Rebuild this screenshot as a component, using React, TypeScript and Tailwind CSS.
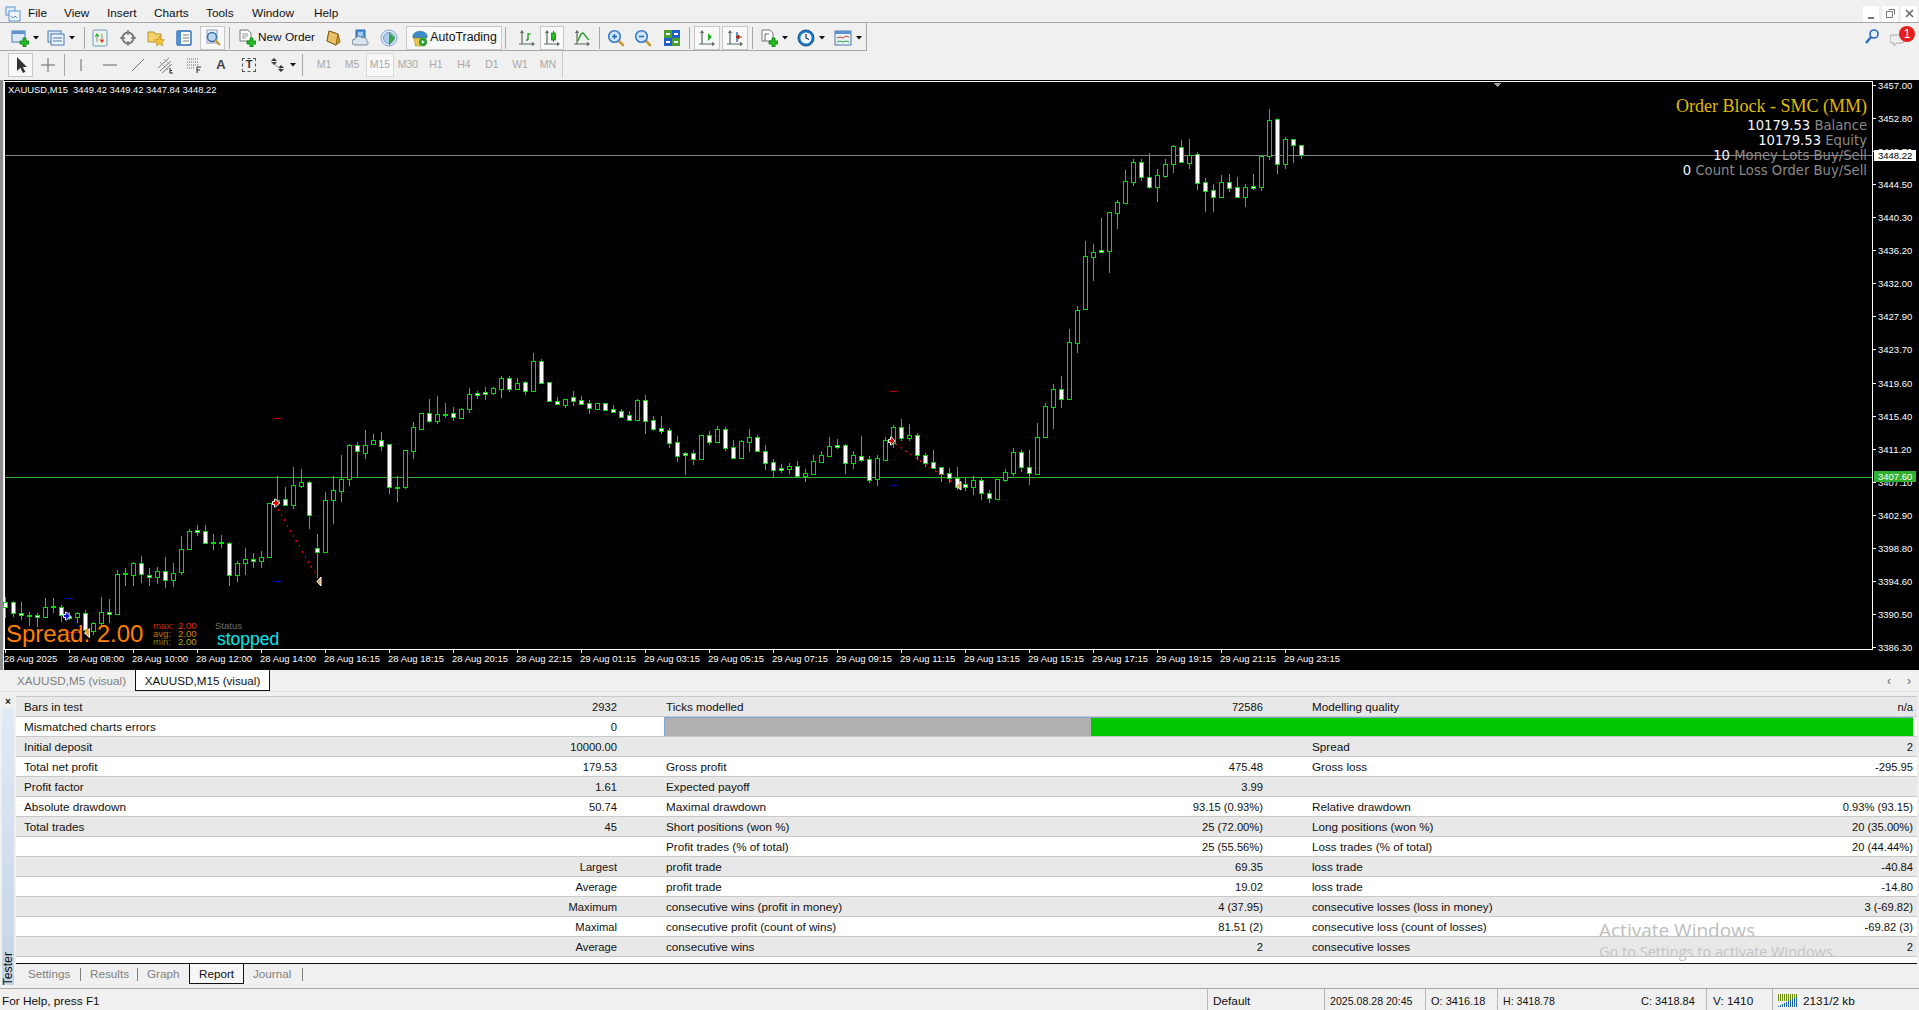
import React from "react";

type C = [number, number, number, number, number];

const lower: C[] = [
[597,602,607,618,1],[601,602,613,617,1],[602,613,615,620,1],[612,615,616,626,1],[613,615,617,627,1],[598,607,617,618,0],[598,606,607,613,1],[605,607,615,622,1],[612,616,618,620,1],[612,613,617,623,0],
[610,613,630,632,1],[622,623,631,635,0],[597,612,623,627,0],[599,612,614,623,1],[570,574,614,615,0],[568,573,574,586,1],[562,563,575,586,0],[556,563,574,583,1],[568,575,577,586,1],[567,571,577,584,0],
[557,571,580,588,1],[563,573,580,587,0],[536,549,572,575,0],[529,531,549,550,0],[525,530,532,536,1],[525,531,543,543,1],[534,542,543,550,1],[535,542,543,548,1],[542,543,575,586,1],[561,563,575,582,0],
[548,559,563,575,0],[553,559,561,568,1],[551,557,561,568,0],[503,503,557,558,0],[476,500,503,505,0],[487,499,505,506,1],[467,485,505,509,0],[469,482,486,488,0],[481,482,515,529,1],[534,548,552,578,1],
[492,500,552,553,0],[476,490,500,524,0],[455,479,491,502,0],[444,445,479,486,0],[442,445,451,477,1],[430,445,453,459,0],[434,440,444,445,0],[432,440,446,451,1],[444,444,487,494,1],[476,487,488,502,1],
[450,450,487,489,0],[422,427,451,459,0],[413,413,429,430,0],[399,413,421,423,1],[396,414,421,424,0],[403,414,415,418,1],[407,413,417,421,1],[408,409,418,418,0],[388,394,409,413,0],[391,393,395,399,1],
[387,392,394,400,1],[387,388,393,395,0],
];

const middleRaw: C[] = [
[108,115,148,173,0],[108,115,148,155,1],[113,130,148,150,0],[123,127,152,165,1],[40,64,152,152,0],[57,64,128,132,1],[125,127,182,186,1],[172,182,193,195,1],[178,178,195,204,0],[153,172,182,198,1],
[168,181,191,195,1],[180,190,203,222,1],[188,190,206,208,0],[190,190,209,210,1],[195,208,215,219,1],[208,214,231,233,1],[213,226,239,240,1],[176,181,240,243,0],[165,181,242,282,1],[228,240,267,273,1],
[228,265,272,282,1],[265,270,308,323,1],[288,307,347,365,1],[337,340,346,405,1],[330,340,356,375,1],[286,286,356,356,0],[273,286,305,315,1],[258,268,305,310,0],[262,268,323,333,1],[300,322,353,357,1],
[300,304,353,355,0],[266,292,305,336,0],[286,292,334,336,1],[315,334,368,390,1],[357,367,389,412,1],[372,385,389,399,1],[369,378,386,402,0],[363,379,407,408,1],[388,400,407,426,0],[346,364,402,402,0],
[333,346,366,369,0],[291,318,348,348,0],[297,316,321,327,1],[312,316,368,402,1],[333,346,368,387,0],[288,349,360,365,1],[348,358,420,430,1],[345,355,418,438,0],[292,301,360,360,0],[255,262,310,325,0],
[238,262,293,303,1],[252,286,294,303,0],[280,286,346,360,1],[340,346,368,381,1],[331,367,383,385,1],[380,382,402,426,1],[385,400,414,430,1],[381,414,440,450,1],[414,432,440,453,1],[408,421,440,465,0],
[415,421,460,480,1],[450,460,473,488,1],[418,418,476,476,0],[388,397,420,426,0],[324,337,398,408,0],[331,337,382,396,1],[331,382,400,435,1],[250,290,402,402,0],
];

const upper: C[] = [
[403,406,437,438,0],[384,389,407,429,0],[376,389,399,408,1],[329,342,399,399,0],[306,310,343,353,0],[241,256,309,309,0],[244,252,257,281,0],[218,250,252,251,1],[212,212,251,273,0],[200,202,213,229,0],
[170,181,203,203,0],[159,162,182,186,0],[159,162,177,181,1],[153,177,187,189,1],[169,175,187,202,0],[159,164,176,178,0],[145,146,164,173,0],[140,147,162,163,1],[139,155,163,169,0],[152,154,183,190,1],
[178,182,191,212,1],[184,190,197,212,1],[175,182,197,198,0],[174,182,188,192,1],[177,187,197,197,1],[184,187,197,207,0],[174,186,188,190,1],[156,156,187,191,0],[109,120,156,160,0],[118,119,164,174,1],
[137,139,164,169,0],[139,139,145,163,1],[145,145,155,159,1],
];

const candles: C[] = [
  ...lower,
  ...middleRaw.map(([a, b, c, d, f]) => [340 + a / 3, 340 + b / 3, 340 + c / 3, 340 + d / 3, f] as C),
  ...upper,
];

const prices = ["3457.00","3452.80","3448.70","3444.50","3440.30","3436.20","3432.00","3427.90","3423.70","3419.60","3415.40","3411.20","3407.10","3402.90","3398.80","3394.60","3390.50","3386.30"];
const times = ["28 Aug 2025","28 Aug 08:00","28 Aug 10:00","28 Aug 12:00","28 Aug 14:00","28 Aug 16:15","28 Aug 18:15","28 Aug 20:15","28 Aug 22:15","29 Aug 01:15","29 Aug 03:15","29 Aug 05:15","29 Aug 07:15","29 Aug 09:15","29 Aug 11:15","29 Aug 13:15","29 Aug 15:15","29 Aug 17:15","29 Aug 19:15","29 Aug 21:15","29 Aug 23:15"];

const GREEN = "#00e000";

function Chart() {
  return (
    <svg viewBox="0 80 1919 590" width={1919} height={590} className="block" shapeRendering="crispEdges" style={{ fontFamily: "'Liberation Sans', sans-serif" }}>
      <rect x={0} y={80} width={1919} height={590} fill="#000" />
      <rect x={0} y={80} width={3} height={590} fill="#8c8c8c" />
      <rect x={3} y={80} width={1} height={590} fill="#e8e8e8" />
      <rect x={4.5} y={81.5} width={1868} height={568} fill="none" stroke="#ffffff" />
      <rect x={5} y={155} width={1867} height={1} fill="#808080" />
      <rect x={5} y={477} width={1867} height={1} fill="#2fb02f" />
      {candles.map(([hi, top, bot, lo, fill], k) => {
        const cx = 5 + 8 * k;
        const t = Math.round(top);
        const b = Math.max(Math.round(bot), t + 1);
        return (
          <g key={k}>
            <rect x={cx} y={Math.round(hi)} width={1} height={Math.max(1, Math.round(lo) - Math.round(hi))} fill={GREEN} />
            <rect x={cx - 2} y={t} width={5} height={b - t + 1} fill={GREEN} />
            {b - t >= 2 && <rect x={cx - 1} y={t + 1} width={3} height={b - t - 1} fill={fill ? "#ffffff" : "#000000"} />}
          </g>
        );
      })}
      {/* trade lines */}
      <line x1={278} y1={509} x2={317} y2={577} stroke="#e00000" strokeDasharray="2 4" />
      <line x1={895} y1={444} x2={955} y2={484} stroke="#e00000" strokeDasharray="2 4" />
      <line x1={65} y1={633} x2={82} y2={632} stroke="#e00000" strokeDasharray="3 1" />
      <line x1={74} y1={621} x2={83} y2={630} stroke="#0000d0" strokeDasharray="2 3" />
      {/* level dashes */}
      <rect x={274} y={418} width={7} height={1} fill="#c00000" />
      <rect x={890} y={391} width={7} height={1} fill="#c00000" />
      <rect x={274} y={581} width={7} height={1} fill="#0000c0" />
      <rect x={890} y={485} width={7} height={1} fill="#0000c0" />
      <rect x={66} y={598} width={7} height={1} fill="#0000c0" />
      {/* arrows */}
      <g shapeRendering="auto">
        <path d="M272.5 501.5h2v-2.5h1l4 4-4 4h-1v-2.500h-2z" fill="#e00000" stroke="#fff" strokeWidth={1} />
        <path d="M888.5 439.500h2v-2.500h1l3.500 4-3.500 4h-1v-2.500h-2z" fill="#e00000" stroke="#fff" strokeWidth={1} />
        <path d="M63.500 614.500h2v-2.500h1l4 4-4 4h-1v-2.500h-2z" fill="#1818e0" stroke="#fff" strokeWidth={1} />
        <path d="M321 577v9l-4-4.500z" fill="#e0a040" stroke="#fff" strokeWidth={1} />
        <path d="M961 481.500v8.500l-5-4.200z" fill="#e0a040" stroke="#fff" strokeWidth={1} />
        <path d="M89.500 628.500v9l-5-4.500z" fill="#e0a040" stroke="#fff" strokeWidth={1} />
      </g>
      <path d="M1493 83h9l-4.500 4z" fill="#9a9a9a" />
      {/* price axis */}
      {prices.map((p, i) => {
        const y = Math.round(85 + 33.06 * i);
        return (
          <g key={p}>
            <rect x={1873} y={y} width={3} height={1} fill="#fff" />
            <text x={1878} y={y + 3.5} fontSize={9.5} fill="#fff" shapeRendering="auto">{p}</text>
          </g>
        );
      })}
      <rect x={1874} y={150} width={42} height={11} fill="#fff" />
      <text x={1878} y={158.5} fontSize={9.5} fill="#000">3448.22</text>
      <rect x={1874} y={471} width={42} height={11} fill="#2fb02f" />
      <text x={1878} y={479.5} fontSize={9.5} fill="#fff">3407.60</text>
      {/* time axis */}
      {times.map((t, i) => (
        <g key={t}>
          <rect x={5 + 64 * i} y={650} width={1} height={3} fill="#fff" />
          <text x={4 + 64 * i} y={662} fontSize={9.5} fill="#fff">{t}</text>
        </g>
      ))}
    </svg>
  );
}

function Row({ children, odd }: { children: React.ReactNode; odd: boolean }) {
  return (
    <div className={`grid grid-cols-[593px_646px_650px] h-5 border-b border-[#c8c8c8] items-center pl-2 text-[11.7px] leading-none text-[#111] ${odd ? "bg-[#e8e8e8]" : "bg-white"}`}>
      {children}
    </div>
  );
}

function Cell({ label, value }: { label?: string; value?: string }) {
  return (
    <div className="flex justify-between h-3 leading-3 items-baseline">
      <span>{label}</span>
      <span className="text-[11.2px]">{value}</span>
    </div>
  );
}

const rows: [string, string, string, string, string, string][] = [
  ["Bars in test", "2932", "Ticks modelled", "72586", "Modelling quality", "n/a"],
  ["Mismatched charts errors", "0", "", "", "", ""],
  ["Initial deposit", "10000.00", "", "", "Spread", "2"],
  ["Total net profit", "179.53", "Gross profit", "475.48", "Gross loss", "-295.95"],
  ["Profit factor", "1.61", "Expected payoff", "3.99", "", ""],
  ["Absolute drawdown", "50.74", "Maximal drawdown", "93.15 (0.93%)", "Relative drawdown", "0.93% (93.15)"],
  ["Total trades", "45", "Short positions (won %)", "25 (72.00%)", "Long positions (won %)", "20 (35.00%)"],
  ["", "", "Profit trades (% of total)", "25 (55.56%)", "Loss trades (% of total)", "20 (44.44%)"],
  ["", "Largest", "profit trade", "69.35", "loss trade", "-40.84"],
  ["", "Average", "profit trade", "19.02", "loss trade", "-14.80"],
  ["", "Maximum", "consecutive wins (profit in money)", "4 (37.95)", "consecutive losses (loss in money)", "3 (-69.82)"],
  ["", "Maximal", "consecutive profit (count of wins)", "81.51 (2)", "consecutive loss (count of losses)", "-69.82 (3)"],
  ["", "Average", "consecutive wins", "2", "consecutive losses", "2"],
];

function Sep() {
  return <div className="w-px h-[22px] bg-[#a8a8a8] shrink-0" />;
}

function Drop({ className = "" }: { className?: string }) {
  return (
    <div className={`w-2 flex justify-center shrink-0 ${className}`}>
      <svg width="6" height="4" viewBox="0 0 6 4"><path d="M0 0h6L3 3.500z" fill="#111" /></svg>
    </div>
  );
}

function Tb({ className = "", active = false, children }: { className?: string; active?: boolean; children: React.ReactNode }) {
  return (
    <div className={`h-6 flex items-center justify-center shrink-0 ${active ? "border border-[#c8c8c8] bg-[#f8f8f8]" : ""} ${className}`}>
      {children}
    </div>
  );
}

const Plus = ({ x = 9, y = 9 }: { x?: number; y?: number }) => (
  <path transform={`translate(${x} ${y})`} d="M3 0h3v3h3v3H6v3H3V6H0V3h3z" fill="#22c022" stroke="#0a7a0a" strokeWidth={0.8} />
);

const Icon = ({ children, w = 18 }: { children: React.ReactNode; w?: number }) => (
  <svg width={w} height={18} viewBox={`0 0 ${w} 18`}>{children}</svg>
);

const Axis = ({ children }: { children?: React.ReactNode }) => (
  <Icon>
    <path d="M4 2v13M1 15h15M2.500 4L4 2l1.500 2M14 13.500l2 1.500-2 1.500" fill="none" stroke="#5b6b60" strokeWidth={1.2} />
    {children}
  </Icon>
);

const Glass = ({ minus }: { minus?: boolean }) => (
  <Icon>
    <path d="M11 11l5 5" stroke="#c89a30" strokeWidth={2.6} strokeLinecap="round" />
    <circle cx={7.5} cy={7.5} r={5.8} fill="#cfe4fa" stroke="#3a7cc8" strokeWidth={1.6} />
    <path d="M5 7.500h5" stroke="#2468b8" strokeWidth={1.5} />
    {!minus && <path d="M7.500 5v5" stroke="#2468b8" strokeWidth={1.5} />}
  </Icon>
);

function Toolbar1() {
  return (
    <div className="h-7 flex items-center border-b border-[#a8a8a8] border-r w-[867px] pl-2 pt-[2px]">
      <Tb className="w-6">
        <Icon>
          <rect x={1} y={2} width={13} height={11} fill="#dbe9f7" stroke="#4a7ab0" />
          <path d="M1 2h13v3H1z" fill="#5d93cf" />
          <Plus />
        </Icon>
      </Tb>
      <Drop />
      <Tb className="w-6 ml-1">
        <Icon>
          <rect x={1} y={2} width={13} height={11} fill="#dbe9f7" stroke="#4a7ab0" />
          <rect x={4} y={5} width={13} height={11} fill="#eaf2fb" stroke="#4a7ab0" />
          <path d="M6 9h9M6 12h9" stroke="#4a7ab0" />
        </Icon>
      </Tb>
      <Drop />
      <div className="ml-2"><Sep /></div>
      <Tb className="w-6 ml-[3px]">
        <Icon>
          <rect x={2} y={1} width={14} height={16} rx={1} fill="#eef5ea" stroke="#6a9ac0" />
          <path d="M6 4l2.500 3.500h-5z" fill="#28b028" />
          <path d="M11 14l-2.500-3.500h5z" fill="#e04020" />
          <path d="M11 5v5M6 8v5" stroke="#888" />
        </Icon>
      </Tb>
      <Tb className="w-7 ml-[2px]">
        <Icon>
          <circle cx={9} cy={9} r={5.5} fill="none" stroke="#777" strokeWidth={2} />
          <path d="M9 1v5M9 12v5M1 9h5M12 9h5" stroke="#777" strokeWidth={1.4} />
        </Icon>
      </Tb>
      <Tb className="w-7">
        <Icon>
          <path d="M1 3h6l1 2h6v8H1z" fill="#f6d36a" stroke="#b8902e" />
          <path d="M12.500 7l1.600 3.400 3.400.5-2.500 2.400.6 3.500-3.100-1.700-3.100 1.700.6-3.500-2.500-2.400 3.400-.5z" fill="#f4c430" stroke="#b8902e" strokeWidth={0.7} />
        </Icon>
      </Tb>
      <Tb className="w-7">
        <Icon>
          <rect x={2} y={2} width={14} height={14} rx={1} fill="#fff" stroke="#2a68b0" strokeWidth={1.4} />
          <rect x={2} y={2} width={4} height={14} fill="#4a90d8" />
          <path d="M8 6h6M8 9h6M8 12h6" stroke="#777" />
        </Icon>
      </Tb>
      <Tb className="w-[25px] ml-[2px]" active>
        <Icon>
          <rect x={3} y={1} width={10} height={13} fill="#eef2f8" stroke="#8aa0b8" />
          <circle cx={8} cy={8} r={4.5} fill="#bcd6f0" stroke="#3a6ea8" strokeWidth={1.4} />
          <path d="M11 11l5 5" stroke="#c89a30" strokeWidth={2.2} />
        </Icon>
      </Tb>
      <div className="ml-1"><Sep /></div>
      <div className="ml-2 h-6 flex items-center shrink-0 w-[81px]">
        <Icon>
          <path d="M2 1h8l3 3v8H2z" fill="#fff" stroke="#777" />
          <path d="M4 5h6M4 7h6M4 9h4" stroke="#999" />
          <Plus />
        </Icon>
        <span className="text-[11.8px] text-[#111] ml-[2px] whitespace-nowrap">New Order</span>
      </div>
      <Tb className="w-[28px]">
        <Icon>
          <path d="M5 2l9 3 2 8-4 3-9-4z" fill="#d8a030" stroke="#8a6318" />
          <path d="M5 2l9 3-2 11-9-4z" fill="#e8c068" stroke="#8a6318" />
        </Icon>
      </Tb>
      <Tb className="w-[28px]">
        <Icon>
          <path d="M4 1h9v10H4z" fill="#4a90d8" stroke="#2a68b0" />
          <path d="M6 4h5M6 6h5" stroke="#fff" />
          <path d="M3 16a3 3 0 010-6 4 4 0 017-1 3.400 3.400 0 015 3.400A2 2 0 0115 16z" fill="#d8e4f0" stroke="#7a8a9a" />
        </Icon>
      </Tb>
      <Tb className="w-[28px]">
        <Icon>
          <circle cx={9} cy={9} r={8} fill="#dbe9f7" stroke="#8aa8c8" />
          <circle cx={9} cy={9} r={5.5} fill="#aecdec" stroke="#7aa0c8" />
          <path d="M9 3l6 6-6 8z" fill="#3aa84a" />
        </Icon>
      </Tb>
      <Tb className="ml-[3px] w-[96px] gap-px" active>
        <Icon>
          <path d="M2 6c2-5 12-5 14 0v3H2z" fill="#3a8ec8" stroke="#2a6a98" strokeWidth={0.6} />
          <path d="M3 9h12l-1.500 8h-9z" fill="#e8c84a" stroke="#a08a20" strokeWidth={0.6} />
          <circle cx={12} cy={13} r={4} fill="#20a030" />
          <path d="M10.800 11l3 2-3 2z" fill="#fff" />
        </Icon>
        <span className="text-[12.3px] text-[#111] whitespace-nowrap">AutoTrading</span>
      </Tb>
      <div className="ml-[3px]"><Sep /></div>
      <Tb className="w-[25px] ml-2">
        <Axis><path d="M10 11V5h2.500M8 11h2" fill="none" stroke="#22a022" strokeWidth={1.4} /></Axis>
      </Tb>
      <Tb className="w-6 ml-px" active>
        <Axis><path d="M10.500 2v11" stroke="#109010" /><rect x={8.5} y={4} width={4} height={7} fill="#22c022" stroke="#108010" strokeWidth={0.8} /></Axis>
      </Tb>
      <Tb className="w-[26px] ml-[5px]">
        <Axis><path d="M5 12c2-6 4-8 5-8s3 5 6 7" fill="none" stroke="#22a022" strokeWidth={1.4} /></Axis>
      </Tb>
      <div className="ml-[4px]"><Sep /></div>
      <Tb className="w-6 ml-[4px]"><Glass /></Tb>
      <Tb className="w-6 ml-[3px]"><Glass minus /></Tb>
      <Tb className="w-6 ml-[5px]">
        <Icon>
          <rect x={1} y={1} width={8} height={8} fill="#48a030" />
          <rect x={9} y={1} width={8} height={8} fill="#2060c8" />
          <rect x={1} y={9} width={8} height={8} fill="#2060c8" />
          <rect x={9} y={9} width={8} height={8} fill="#48a030" />
          <path d="M3 5h4M11 5h4M3 13h4M11 13h4" stroke="#fff" strokeWidth={2} />
        </Icon>
      </Tb>
      <div className="ml-[5px]"><Sep /></div>
      <Tb className="w-[26px] ml-[4px]" active>
        <Axis><path d="M10 4l4 4-4 4z" fill="#22b022" /></Axis>
      </Tb>
      <Tb className="w-[26px] ml-[2px]" active>
        <Axis><path d="M11 3v10" stroke="#2a68b0" strokeWidth={1.4} /><path d="M16 8h-3M13 6l-3 2 3 2z" fill="#b02a10" stroke="#b02a10" /></Axis>
      </Tb>
      <div className="ml-[4px]"><Sep /></div>
      <Tb className="w-6 ml-[4px]">
        <Icon>
          <path d="M2 1h8l3 3v8H2z" fill="#fff" stroke="#777" />
          <path d="M5 5v7M5 5h4" stroke="#666" />
          <Plus />
        </Icon>
      </Tb>
      <Drop />
      <Tb className="w-6 ml-[5px]">
        <Icon>
          <circle cx={9} cy={9} r={8} fill="#1e78c8" stroke="#0f4f90" />
          <circle cx={9} cy={9} r={5.6} fill="#eef6ff" />
          <path d="M9 5v4l3 1.500" fill="none" stroke="#234" strokeWidth={1.2} />
        </Icon>
      </Tb>
      <Drop />
      <Tb className="w-6 ml-[5px]">
        <Icon>
          <rect x={1} y={2} width={16} height={14} fill="#e8f0f8" stroke="#4a7ab0" />
          <path d="M1 2h16v3H1z" fill="#5d93cf" />
          <path d="M3 9l3-1 3 1 3-2 3 1" fill="none" stroke="#c04020" />
          <path d="M3 13l3-1 3 1 3-1 3 1" fill="none" stroke="#30a040" />
        </Icon>
      </Tb>
      <Drop />
    </div>
  );
}

const tfs = ["M1", "M5", "M15", "M30", "H1", "H4", "D1", "W1", "MN"];

function Toolbar2() {
  return (
    <div className="h-[27px] flex items-center w-[563px] border-r border-[#c8c8c8] pl-2">
      <Tb className="w-[25px]" active>
        <svg width="12" height="18" viewBox="0 0 12 18"><path d="M2 1v14l3.400-3.200L8 17l2.400-1.200-2.600-4.800H12z" fill="#333" /></svg>
      </Tb>
      <Tb className="w-6 ml-[3px]">
        <Icon><path d="M9 2v14M2 9h14" stroke="#666" /></Icon>
      </Tb>
      <div className="ml-[4px]"><Sep /></div>
      <Tb className="w-6 ml-[4px]"><Icon><path d="M9 3v12" stroke="#666" /></Icon></Tb>
      <Tb className="w-[28px] ml-[3px]"><Icon><path d="M2 9h14" stroke="#666" /></Icon></Tb>
      <Tb className="w-[28px]"><Icon><path d="M3 15L15 3" stroke="#777" /></Icon></Tb>
      <Tb className="w-[28px]">
        <Icon>
          <path d="M1 12L12 2M3 15L14 5M5 17L15 8" stroke="#777" />
          <path d="M3 6l8 8M7 3l6 6" stroke="#777" strokeDasharray="1 1" />
          <path d="M13 12v5h3M13 14.500h2" stroke="#333" fill="none" strokeWidth={1.1} />
        </Icon>
      </Tb>
      <Tb className="w-[28px]">
        <Icon>
          <path d="M2 3h12M2 6h12M2 9h12" stroke="#666" strokeDasharray="1 1" />
          <path d="M2 12h8" stroke="#666" strokeDasharray="1 1" />
          <path d="M12 11v6M12 11h4M12 14h3" stroke="#333" fill="none" strokeWidth={1.1} />
        </Icon>
      </Tb>
      <Tb className="w-[26px]"><span className="text-[13px] text-[#444] font-bold">A</span></Tb>
      <Tb className="w-[30px]">
        <div className="w-[14px] h-[14px] border border-dashed border-[#555] flex items-center justify-center text-[11px] font-bold text-[#333] leading-none">T</div>
      </Tb>
      <Tb className="w-6 ml-px">
        <Icon>
          <path d="M6 2l3 3H3zM6 9l-3-3h6z" fill="#333" />
          <path d="M13 9l3 3h-6zM13 16l-3-3h6z" fill="#333" />
          <path d="M3 6l10 7" stroke="#888" />
        </Icon>
      </Tb>
      <Drop />
      <div className="ml-[5px]"><Sep /></div>
      <div className="flex ml-[7px] text-[10.5px] text-[#a8a8a8]">
        {tfs.map((t) => (
          <div key={t} className={`w-[28px] h-6 flex items-center justify-center ${t === "M15" ? "border border-[#d8d8d8] bg-[#f8f8f8]" : ""}`}>{t}</div>
        ))}
      </div>
    </div>
  );
}

export default function App() {
  return (
    <div className="relative w-[1919px] h-[1010px] overflow-hidden bg-[#f0f0f0] flex flex-col" style={{ fontFamily: "'Liberation Sans', Arial, sans-serif" }}>
      {/* menu */}
      <div className="h-[23px] flex items-center pt-[5px] border-b border-[#a8a8a8] text-[11.8px] text-[#111] shrink-0">
        <div className="w-[28px] pl-[5px]">
          <svg width="16" height="16" viewBox="0 0 16 16">
            <rect x={1} y={1} width={9} height={8} fill="#e4eef8" stroke="#5d93cf" />
            <rect x={4} y={5} width={11} height={10} fill="#eef5fc" stroke="#5d93cf" />
            <path d="M6 10l2 2 2-2 2 2" fill="none" stroke="#5d93cf" />
          </svg>
        </div>
        <span className="w-9">File</span>
        <span className="w-[43px]">View</span>
        <span className="w-[47px]">Insert</span>
        <span className="w-[52px]">Charts</span>
        <span className="w-[46px]">Tools</span>
        <span className="w-[62px]">Window</span>
        <span>Help</span>
        <div className="ml-auto flex items-center gap-[3px] pr-[2px]">
          <div className="w-4 h-4 bg-white flex items-end justify-center pb-[3px]"><div className="w-[6px] h-[2px] bg-[#777]" /></div>
          <div className="w-4 h-4 bg-white flex items-center justify-center">
            <svg width="9" height="9" viewBox="0 0 9 9"><path d="M2.500.5h6v5M.5 2.500h6v6h-6z" fill="none" stroke="#777" /></svg>
          </div>
          <div className="w-4 h-4 bg-white flex items-center justify-center">
            <svg width="9" height="9" viewBox="0 0 9 9"><path d="M1 1l7 7M8 1L1 8" stroke="#666" strokeWidth={1.6} /></svg>
          </div>
        </div>
      </div>
      {/* toolbars */}
      <div className="relative shrink-0 h-[57px]">
        <Toolbar1 />
        <Toolbar2 />
        <div className="absolute left-[1864px] top-[5px]">
          <svg width="16" height="18" viewBox="0 0 16 18">
            <circle cx={10} cy={6} r={4} fill="#e8f2fc" stroke="#2a68c0" strokeWidth={1.6} />
            <path d="M7 9l-5 6" stroke="#2a68c0" strokeWidth={2.4} />
          </svg>
        </div>
        <div className="absolute left-[1890px] top-[4px] w-7 h-7">
          <svg className="absolute left-0 top-[6px]" width="16" height="16" viewBox="0 0 16 16"><path d="M2 2h10a2 2 0 012 2v4a2 2 0 01-2 2H7l-3 3v-3H2a2 2 0 01-2-2V4a2 2 0 012-2z" fill="#eeeeee" stroke="#aaa" /></svg>
          <div className="absolute left-[9px] top-[-1px] w-4 h-4 rounded-full bg-[#e0201c] text-white text-[12px] flex items-center justify-center leading-none">1</div>
        </div>
      </div>
      {/* chart */}
      <div className="relative shrink-0 h-[590px]">
        <Chart />
        <div className="absolute left-2 top-[5px] text-[9.4px] text-white whitespace-pre leading-none">XAUUSD,M15  3449.42 3449.42 3447.84 3448.22</div>
        <div className="absolute right-[52px] top-[16px] flex flex-col items-end leading-[15px] text-[13.2px] text-[#8a8a8a] whitespace-pre" style={{ fontFamily: "'DejaVu Sans', sans-serif" }}>
          <div className="text-[18px] leading-5 mb-[2px] text-[#e0bc00]" style={{ fontFamily: "'Liberation Serif', serif" }}>Order Block - SMC (MM)</div>
          <div><span className="text-[#f0f6ff]">10179.53</span> Balance</div>
          <div><span className="text-[#f0f6ff]">10179.53</span> Equity</div>
          <div><span className="text-[#f0f6ff]">10</span> Money Lots Buy/Sell</div>
          <div><span className="text-[#f0f6ff]">0</span> Count Loss Order Buy/Sell</div>
        </div>
        <div className="absolute left-[6px] top-[540px] text-[24px] leading-7 text-[#ff8000] whitespace-pre">Spread: 2.00</div>
        <div className="absolute left-[153px] top-[542px] grid grid-cols-[25px_auto] text-[9.5px] leading-[8px]">
          <span className="text-[#c83000]">max:</span><span className="text-[#e03000]">2.00</span>
          <span className="text-[#c07000]">avg:</span><span className="text-[#d88000]">2.00</span>
          <span className="text-[#808000]">min:</span><span className="text-[#c0a000]">2.00</span>
        </div>
        <div className="absolute left-[215px] top-[540px] text-[9.5px] leading-3 text-[#707070]">Status</div>
        <div className="absolute left-[217px] top-[549px] text-[17.500px] leading-5 text-[#00e8f0]">stopped</div>
      </div>
      {/* chart tabs */}
      <div className="h-[22px] shrink-0 flex items-start text-[11.7px] border-b border-[#e0e0e0] relative">
        <div className="w-[135px] h-[21px] flex items-center pl-[17px] pt-px text-[#808080]">XAUUSD,M5 (visual)</div>
        <div className="w-[135px] h-[21px] flex items-center justify-center pt-px bg-white border-x border-b border-[#111] text-[#111]">XAUUSD,M15 (visual)</div>
        <div className="ml-auto flex gap-4 pr-[8px] pt-[2px] text-[#666] text-[12px]"><span>‹</span><span>›</span></div>
      </div>
      {/* tester */}
      <div className="flex-1 flex min-h-0 pt-[4px]">
        <div className="w-4 shrink-0 flex flex-col items-center pb-[3px]">
          <div className="h-[12px] text-[10px] font-bold leading-3 text-[#222]">×</div>
          <div className="flex-1 w-3 ml-[-1px] bg-gradient-to-b from-[#e0ebf6] to-[#c3d4e4] flex items-end justify-center overflow-hidden">
            <span className="text-[12.3px] leading-3 text-[#111] [writing-mode:vertical-rl] rotate-180 pb-[1px]">Tester</span>
          </div>
        </div>
        <div className="flex-1 flex flex-col min-w-0 pr-[2px]">
          <div className="border-t border-[#c8c8c8]">
            {rows.map((r, i) => (
              <Row key={i} odd={i % 2 === 0}>
                <Cell label={r[0]} value={r[1]} />
                {i === 1 ? (
                  <div className="col-span-2 ml-[47px] h-[19px] border-t border-l border-[#7aa7d8] flex">
                    <div className="w-[426px] bg-[#b0b0b0]" />
                    <div className="flex-1 bg-[#00c800]" />
                  </div>
                ) : (
                  <>
                    <div className="pl-[49px]"><Cell label={r[2]} value={r[3]} /></div>
                    <div className="pl-[49px]"><Cell label={r[4]} value={r[5]} /></div>
                  </>
                )}
              </Row>
            ))}
          </div>
          <div className="h-[6px] bg-white" />
          <div className="h-[22px] flex items-start border-t border-[#111] text-[11.7px] text-[#808080]">
            <span className="w-16 h-[20px] flex items-center pl-[12px]">Settings</span>
            <div className="w-px h-[13px] bg-[#808080] mt-[4px]" />
            <span className="w-[56px] h-[20px] flex items-center pl-[9px]">Results</span>
            <div className="w-px h-[13px] bg-[#808080] mt-[4px]" />
            <span className="w-[51px] h-[20px] flex items-center pl-[9px]">Graph</span>
            <span className="w-[55px] h-[20px] flex items-center justify-center bg-[#f6f6f6] border-x border-b border-[#111] text-[#111]">Report</span>
            <span className="w-[58px] h-[20px] flex items-center pl-[9px]">Journal</span>
            <div className="w-px h-[13px] bg-[#808080] mt-[4px]" />
          </div>
        </div>
      </div>
      {/* status */}
      <div className="h-[22px] shrink-0 border-t border-[#a8a8a8] flex items-center text-[11.8px] leading-3 text-[#111] relative">
        <span className="w-[1207px] h-full pl-[2px] pt-[6px]">For Help, press F1</span>
        <div className="w-[117px] h-full border-l border-[#b8b8b8] pl-[5px] pt-[6px]">Default</div>
        <div className="w-[101px] h-full border-l border-[#b8b8b8] pl-[5px] pt-[6px] text-[10.6px]">2025.08.28 20:45</div>
        <div className="w-[72px] h-full border-l border-[#b8b8b8] pl-[5px] pt-[6px] text-[11px]">O: 3416.18</div>
        <div className="w-[71px] h-full border-l border-[#b8b8b8] pl-[5px] pt-[6px] text-[10.6px]">H: 3418.78</div>
        <div className="w-[69px] h-full" />
        <div className="w-[69px] h-full pl-[4px] pt-[6px] text-[11px]">C: 3418.84</div>
        <div className="w-[66px] h-full border-l border-[#b8b8b8] pl-[6px] pt-[6px]">V: 1410</div>
        <div className="flex-1 h-full border-l border-[#b8b8b8] pl-[5px] flex items-start pt-[4px] gap-[3px]">
          <svg width="22" height="14" viewBox="0 0 22 14">
            {[0, 1, 2, 3, 4, 5, 6, 7, 8, 9].map((i) => (
              <g key={i}>
                <rect x={i * 2} y={1} width={1} height={7} fill="#6a8a10" />
                <rect x={i * 2} y={13 - i} width={1} height={i + 1} fill="#1a5f9a" />
              </g>
            ))}
          </svg>
          <span className="pt-[2px]">2131/2 kb</span>
        </div>
      </div>
      {/* activation watermark */}
      <div className="absolute left-[1599px] top-[916px] text-[19px] leading-7 text-[#bdbdbd] pointer-events-none" style={{ fontFamily: "'Open Sans', sans-serif" }}>Activate Windows</div>
      <div className="absolute left-[1599px] top-[942px] text-[14.500px] leading-5 text-[#c4c4c4] pointer-events-none whitespace-nowrap" style={{ fontFamily: "'Open Sans', sans-serif" }}>Go to Settings to activate Windows.</div>
    </div>
  );
}
